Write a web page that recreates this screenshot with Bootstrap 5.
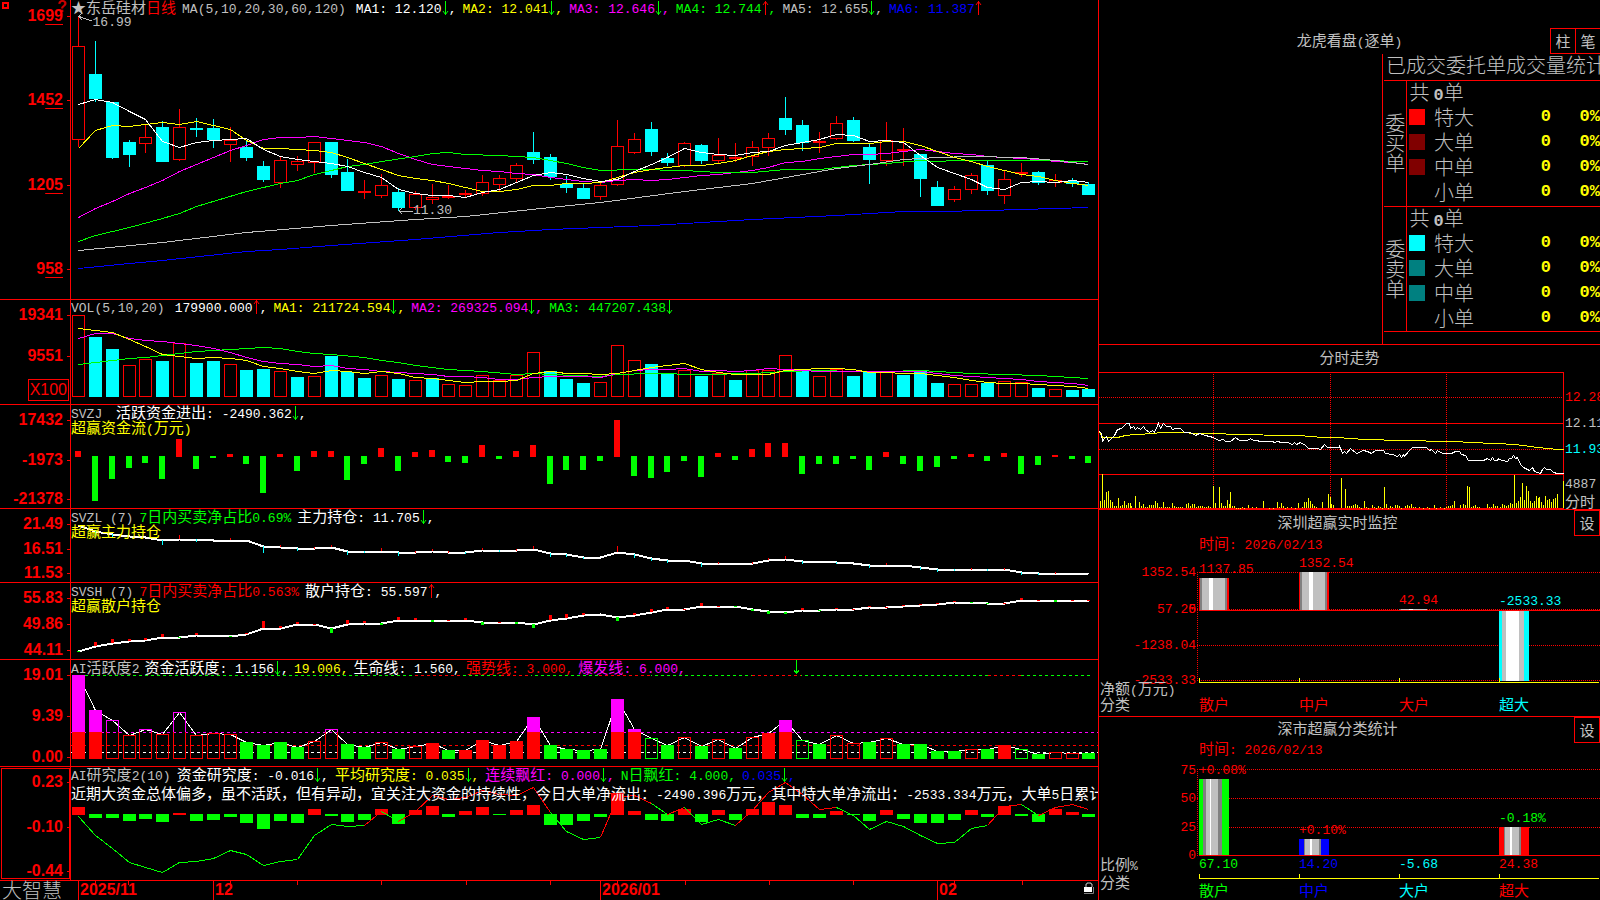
<!DOCTYPE html>
<html lang="zh-CN">
<head>
<meta charset="utf-8">
<meta name="viewport" content="width=device-width, initial-scale=1">
<title>东岳硅材 日线 - 大智慧</title>
<link href="https://cdn.jsdelivr.net/npm/bootstrap@5.3.0/dist/css/bootstrap.min.css" rel="stylesheet">
<style>
:root{--up:#f00;--down:#0ff;--ash:#c0c0c0}
body{background:#000;color:var(--ash);font:13px/16px "Liberation Mono","Noto Sans CJK SC",monospace;overflow:hidden}
.h{font-family:"Noto Sans CJK SC",sans-serif;font-size:15px;font-weight:400}
.app{display:grid;height:100vh;grid-template-columns:minmax(0,1099fr) minmax(0,501fr)}
.charts{display:grid;grid-template-columns:minmax(0,1fr);grid-template-rows:minmax(0,300fr) minmax(0,105fr) minmax(0,104fr) minmax(0,74fr) minmax(0,77fr) minmax(0,107fr) minmax(0,114fr) minmax(0,19fr);border-right:1px solid red}
.side{display:grid;grid-template-columns:minmax(0,1fr);grid-template-rows:minmax(0,345fr) minmax(0,165fr) minmax(0,207fr) minmax(0,183fr)}
.pane{display:flex;border-bottom:1px solid red;min-height:0}
.scale{flex:0 0 71px;border-right:1px solid red;padding:6px 7px 0 0;display:flex;flex-direction:column;justify-content:space-between;align-items:flex-end;color:red;font:bold 16px/18px "Liberation Sans",sans-serif;position:relative}
.scale>span{position:relative}
.scale>span::after{content:"";position:absolute;right:-7px;top:9px;width:3px;height:1px;background:red}
.scale.price{padding-top:7px;padding-bottom:21px}
.scale u{text-underline-offset:3px;text-decoration-thickness:1px}
.scale.vol{justify-content:flex-start;gap:23px}
.scale .unit{border:1px solid red;padding:1px 1px;margin:-9px -6px 0 0;font-weight:400}
.scale .unit::after{display:none}
.scale.picked{outline:1px solid red;outline-offset:-2px}
.help{position:absolute;top:0;right:3px;color:#c00;line-height:14px}
.plot{flex:1;position:relative;min-width:0;overflow:hidden}
.plot svg.g,.mini svg.g,.bars svg.g{position:absolute;inset:0;width:100%;height:100%;shape-rendering:crispEdges}
svg.g *{vector-effect:non-scaling-stroke}
.legend{position:relative;display:flex;align-items:baseline;gap:6px;white-space:pre;height:15px;line-height:14px}
.legend.tight{gap:5px}
.sub{position:relative;white-space:pre;line-height:14px;color:#ff0}
.a{width:7px;height:14px;vertical-align:-2px;fill:none;stroke:currentColor}
.r{color:red}.gn{color:#0f0}.y{color:#ff0}.m{color:#f0f}.b{color:#00f}.c{color:#0ff}.w{color:#fff}
.note{position:absolute}
.times{display:flex;min-height:0}
.brand{flex:0 0 78px;font-size:20px;font-weight:300;line-height:18px;padding-left:2px}
.months{flex:1;display:grid;grid-template-columns:135fr 387fr 337fr 161fr;position:relative;color:red;font:bold 16px/18px "Liberation Sans",sans-serif}
.months>span{border-left:1px solid red;padding-left:1px}
.lock{position:absolute;right:3px;top:1px;width:12px;height:13px}
.ttl{text-align:center;white-space:pre;flex:none}
.stamp{padding-left:100px;height:16px;flex:none;line-height:14px;color:red}
.sq{border:1px solid red;border-radius:0;color:var(--ash);padding:0;width:26px;height:26px;line-height:22px;background:#000}
.sq:hover{color:#fff;border-color:red}
.pair .sq{width:25px;border-right:0}
.orders{width:218px;border-left:1px solid red;padding-left:1px;font-size:20px;overflow:hidden}
.orders .h{font-size:20px;font-weight:300}
.orders table{width:100%;border-collapse:collapse;table-layout:fixed;line-height:22px}
.orders h2{margin:0;padding-left:2px;line-height:22px;height:26px;white-space:nowrap}
.orders tbody{border-top:1px solid red}
.orders tbody:last-child{border-bottom:1px solid red}
.orders td,.orders th{padding:0;height:25px;white-space:nowrap;vertical-align:top}
.orders .kind{border-right:1px solid red;writing-mode:vertical-rl;text-align:center;vertical-align:middle;line-height:20px}
.orders .n{color:#ff0;text-align:right;font:bold 17px/22px "Liberation Mono",monospace}
.orders .sum{padding-left:3px}
.orders .sum b{font:bold 17px/20px "Liberation Mono",monospace;margin-left:4px}
.chip{display:block;width:16px;height:16px;margin:3px 0 0 2px}
.mini{flex:1;position:relative}
.ticks{width:36px;overflow:hidden;padding-left:1px;position:relative}
.bars{position:relative;flex:1;min-height:0}
.bars .v,.bars .s{position:absolute;line-height:16px;margin-top:-8px;white-space:pre}
.bars .s{right:404px;color:red}
.bars .k{position:absolute;left:1px;line-height:16px;margin-top:-9px}
</style>
</head>
<body>
<svg width="0" height="0" class="position-absolute"><symbol id="dn" viewBox="0 0 7 14"><path d="M3.5 0V14M1 10L3.5 13.5L6 10"/></symbol><symbol id="up" viewBox="0 0 7 14"><path d="M3.5 0V14M1 4L3.5 .5L6 4"/></symbol></svg>
<main class="app">
<section class="charts">
 <div class="pane"><div class="scale price"><svg class="position-absolute top-0 start-0" width="70" height="16" fill="none" stroke="red"><path d="M3 3h5v5h-5z" stroke-width="2"/></svg><b class="help">?</b><span>16<u>99</u></span><span>14<u>52</u></span><span>12<u>05</u></span><span>9<u>58</u></span></div>
  <div class="plot" id="p1"><div class="legend"><span class="h">★东岳硅材<span class="r">日线</span></span><span>MA(5,10,20,30,60,120)</span><span class="w ms-1">MA1: 12.120<svg class="a gn"><use href="#dn"/></svg>,</span><span class="y">MA2: 12.041<svg class="a gn"><use href="#dn"/></svg>,</span><span class="m">MA3: 12.646<svg class="a gn"><use href="#dn"/></svg>,</span><span class="gn">MA4: 12.744<svg class="a r"><use href="#up"/></svg>,</span><span>MA5: 12.655<svg class="a gn"><use href="#dn"/></svg>,</span><span class="b">MA6: 11.387<svg class="a r"><use href="#up"/></svg></span></div>
  <span class="note" style="left:2.1%;top:15px">16.99</span><span class="note" style="left:33.3%;top:68%">11.30</span></div></div>
 <div class="pane"><div class="scale vol"><span>19341</span><span>9551</span><span class="unit">X100</span></div>
  <div class="plot" id="p2"><div class="legend"><span>VOL(5,10,20)</span><span class="w ms-1">179900.000<svg class="a r"><use href="#up"/></svg>,</span><span class="y">MA1: 211724.594<svg class="a gn"><use href="#dn"/></svg>,</span><span class="m">MA2: 269325.094<svg class="a gn"><use href="#dn"/></svg>,</span><span class="gn">MA3: 447207.438<svg class="a"><use href="#dn"/></svg></span></div></div></div>
 <div class="pane"><div class="scale"><span>17432</span><span>-1973</span><span>-21378</span></div>
  <div class="plot" id="p3"><div class="legend"><span>SVZJ </span><span class="w"><span class="h">活跃资金进出</span>: -2490.362<svg class="a gn"><use href="#dn"/></svg>,</span></div><div class="sub"><span class="h">超赢资金流</span>(<span class="h">万元</span>)</div></div></div>
 <div class="pane"><div class="scale"><span>21.49</span><span>16.51</span><span>11.53</span></div>
  <div class="plot" id="p4"><div class="legend"><span>SVZL (7)</span><span class="gn">7<span class="h">日内买卖净占比</span>0.69%</span><span class="w"><span class="h">主力持仓</span>: 11.705<svg class="a gn"><use href="#dn"/></svg>,</span></div><div class="sub h">超赢主力持仓</div></div></div>
 <div class="pane"><div class="scale"><span>55.83</span><span>49.86</span><span>44.11</span></div>
  <div class="plot" id="p5"><div class="legend"><span>SVSH (7)</span><span class="r">7<span class="h">日内买卖净占比</span>0.563%</span><span class="w"><span class="h">散户持仓</span>: 55.597<svg class="a r"><use href="#up"/></svg>,</span></div><div class="sub h">超赢散户持仓</div></div></div>
 <div class="pane"><div class="scale"><span>19.01</span><span>9.39</span><span>0.00</span></div>
  <div class="plot" id="p6"><div class="legend tight"><span>AI<span class="h">活跃度</span>2</span><span class="w"><span class="h">资金活跃度</span>: 1.156<svg class="a gn"><use href="#dn"/></svg>,</span><span class="y">19.006,</span><span class="w"><span class="h">生命线</span>: 1.560,</span><span class="r"><span class="h">强势线</span>: 3.000,</span><span class="m"><span class="h">爆发线</span>: 6.000,</span></div></div></div>
 <div class="pane"><div class="scale picked"><span>0.23</span><span>-0.10</span><span>-0.44</span></div>
  <div class="plot" id="p7"><div class="legend"><span>AI<span class="h">研究度</span>2(10)</span><span class="w"><span class="h">资金研究度</span>: -0.016<svg class="a gn"><use href="#dn"/></svg>,</span><span class="y"><span class="h">平均研究度</span>: 0.035<svg class="a gn"><use href="#dn"/></svg>,</span><span class="m"><span class="h">连续飘红</span>: 0.000<svg class="a gn"><use href="#dn"/></svg>,</span><span class="gn">N<span class="h">日飘红</span>: 4.000,</span><span class="b">0.035<svg class="a gn"><use href="#dn"/></svg>,</span></div><div class="sub w pt-1"><span class="h">近期大资金总体偏多，虽不活跃，但有异动，宜关注大资金的持续性，今日大单净流出：</span>-2490.396<span class="h">万元，其中特大单净流出：</span>-2533.334<span class="h">万元，大单</span>5<span class="h">日累计</span></div></div></div>
 <div class="times"><div class="brand h">大智慧</div><div class="months"><svg class="position-absolute w-100 h-100" viewBox="0 0 1020 19" preserveAspectRatio="none" shape-rendering="crispEdges" stroke="red" id="tk"></svg><span>2025/11</span><span>12</span><span>2026/01</span><span>02</span>
  <svg class="lock" viewBox="0 0 12 13"><path d="M3 5V2h1V1h4v1h1v3" fill="none" stroke="#c0c0c0"/><path d="M1 5h8v5h-8z" fill="#fff"/><path d="M1 11.5h9.5V5" fill="none" stroke="#808080"/></svg></div></div>
</section>
<section class="side">
 <div class="pane flex-column position-relative"><div class="d-flex align-items-center justify-content-center flex-shrink-0" style="height:54px;padding-top:28px"><span class="ttl"><span class="h">龙虎看盘</span>(<span class="h">逐单</span>)</span><span class="pair position-absolute end-0 d-flex"><button class="btn sq h">柱</button><button class="btn sq h">笔</button></span></div>
  <div class="orders ms-auto flex-grow-1"><h2 class="h" id="oc">已成交委托单成交量统计</h2><table aria-labelledby="oc"><colgroup><col style="width:22px"><col style="width:28px"><col style="width:60px"><col><col style="width:49px"></colgroup>
  <tbody><tr><th class="kind h" rowspan="5">委买单</th><td colspan="4" class="h sum">共<b>0</b>单</td></tr>
  <tr><td><i class="chip" style="background:#f00"></i></td><td class="h">特大</td><td class="n">0</td><td class="n">0%</td></tr>
  <tr><td><i class="chip" style="background:#800000"></i></td><td class="h">大单</td><td class="n">0</td><td class="n">0%</td></tr>
  <tr><td><i class="chip" style="background:#800000"></i></td><td class="h">中单</td><td class="n">0</td><td class="n">0%</td></tr>
  <tr><td></td><td class="h">小单</td><td class="n">0</td><td class="n">0%</td></tr></tbody>
  <tbody><tr><th class="kind h" rowspan="5">委卖单</th><td colspan="4" class="h sum">共<b>0</b>单</td></tr>
  <tr><td><i class="chip" style="background:#0ff"></i></td><td class="h">特大</td><td class="n">0</td><td class="n">0%</td></tr>
  <tr><td><i class="chip" style="background:#008080"></i></td><td class="h">大单</td><td class="n">0</td><td class="n">0%</td></tr>
  <tr><td><i class="chip" style="background:#008080"></i></td><td class="h">中单</td><td class="n">0</td><td class="n">0%</td></tr>
  <tr><td></td><td class="h">小单</td><td class="n">0</td><td class="n">0%</td></tr></tbody></table></div></div>
 <div class="pane flex-column"><div class="ttl h" style="height:27px;line-height:23px">分时走势</div><div class="d-flex flex-grow-1"><div class="mini" id="mn"></div><div class="ticks d-flex flex-column"><span class="r" style="margin-top:18px">12.28</span><span style="margin-top:10px">12.11</span><span class="c" style="margin-top:10px">11.93</span><span class="mt-auto">4887</span><span class="h">分时</span></div></div></div>
 <div class="pane flex-column position-relative"><button class="btn sq h position-absolute end-0 top-0">设</button><div class="ttl h pe-4" style="height:26px;line-height:24px">深圳超赢实时监控</div><div class="stamp"><span class="h">时间</span>: 2026/02/13</div><div class="bars" id="b1"></div></div>
 <div class="pane flex-column position-relative border-0"><button class="btn sq h position-absolute end-0 top-0">设</button><div class="ttl h pe-4" style="height:24px;line-height:22px">深市超赢分类统计</div><div class="stamp"><span class="h">时间</span>: 2026/02/13</div><div class="bars" id="b2"></div></div>
</section>
</main>
<script>
// Series are stored in thirds of a pixel; each pane converts them with its own base offset.
const N=61,W=1027,cx=i=>Math.round(7+16.84*i),R='#f00',G='#0f0',C='#0ff';
const el=id=>document.getElementById(id);
const rect=(x,y,w,h,f)=>`<rect x="${x}" y="${y}" width="${w}" height="${Math.max(h,1)}" fill="${f}"/>`;
const box=(x,y,w,h,s)=>`<rect x="${x+.5}" y="${y+.5}" width="${w-1}" height="${Math.max(h-1,1)}" fill="none" stroke="${s}"/>`;
const ln=(x1,y1,x2,y2,s,e='')=>`<path d="M${x1} ${y1}L${x2} ${y2}" stroke="${s}" ${e}/>`;
const nums=s=>s.trim().split(/[\s,]+/).map(Number);
const line=(pts,s,w=1)=>`<polyline points="${pts.map(p=>p.join()).join(' ')}" fill="none" stroke="${s}" stroke-width="${w}"/>`;
const put=(id,w,h,s)=>el(id).insertAdjacentHTML('afterbegin',`<svg class="g" viewBox="0 0 ${w} ${h}" preserveAspectRatio="none">${s}</svg>`);
const dense=(a,Y)=>a.map((v,i)=>[cx(i)+.5,Y(v)+.5]);
const sparse=(a,Y)=>{const o=[];for(let i=0;i<a.length;i+=2)o.push([cx(a[i])+.5,Y(a[i+1])+.5]);return o};
const mk=off=>v=>Math.round(v/3+off);

// daily candles: kind high top bottom low
const K=`r 48 139 421 440|c 122 222 297 305|c 305 306 474 477|c 420 426 465 501|r 375 412 432 459|c 363 381 486 486|r 327 382 480 480|c 354 384 390 411|c 357 384 420 444|r 381 419 434 486|c 420 441 474 483|c 483 498 540 546|r 467 481 549 564|r 468 484 495 513|r 426 427 489 519|c 426 426 525 534|c 477 516 573 573|r 540 573 579 597|r 522 556 588 594|c 564 576 624 632|r 573 583 624 630|r 552 592 600 612|r 555 587 594 594|r 570 579 585 590|r 525 547 582 588|r 525 535 555 573|r 489 496 537 545|c 396 456 480 492|c 462 471 532 540|c 528 552 564 579|c 552 564 597 597|r 545 556 591 600|r 360 439 555 555|r 399 418 459 462|c 366 387 456 468|c 459 474 489 498|r 426 430 498 498|c 432 435 483 492|r 414 466 483 492|r 429 470 477 486|r 423 442 470 498|r 399 415 444 468|c 291 354 390 405|c 360 375 429 453|r 396 423 429 459|r 348 370 417 420|c 351 360 423 426|c 432 441 480 552|r 366 421 483 498|r 384 447 453 498|c 462 462 537 591|c 543 561 618 618|r 558 568 600 606|r 519 526 570 582|c 483 495 573 585|r 513 538 588 612|r 489 516 519 531|c 513 516 549 555|r 522 541 548 561|c 534 542 552 561|c 546 552 585 585`.split('|');
{const Y=mk(0);let s='';K.forEach((k,i)=>{let[t,...v]=k.split(' ');v=v.map(Number).map(Y);const x=cx(i);
 if(t=='c')s+=rect(x,v[0],1,v[3]-v[0],C)+rect(x-6,v[1],13,v[2]-v[1],C);
 else s+=rect(x,v[0],1,v[1]-v[0],R)+rect(x,v[2],1,Math.max(v[3]-v[2],0)||1,R)+box(x-6,v[1],13,v[2]-v[1],R)});
s+=line(sparse(nums('0 805 3 790 5 780 10 754 12 748 15 736 20 717 25 697 28 688 34 676 40 658 45 646 49 634 51 634 54 631 60 622'),Y),'#00f');
s+=line(dense(nums('652 623 602 580 560 539 514 492 472 451 434 418 412 411 408 413 421 427 439 458 478 493 498 505 511 514 518 522 530 537 544 545 540 538 541 537 532 526 523 516 509 500 487 482 475 467 463 463 458 452 448 452 458 463 468 470 473 478 482 487 491'),Y),'#f0f');
s+=line(sparse(nums('0 724 1 706 3 680 5 653 6 638 7 619 10 574 11 562 12 549 13 539 14 523 15 511 16 499 17 493 18 482 20 468 21 460 22 457 23 463 25 465 27 472 28 480 29 489 30 502 31 510 33 508 36 511 38 517 40 517 42 508 44 508 46 496 48 490 50 481 51 484 52 481 57 481 60 484'),Y),G);
s+=line(sparse(nums('0 751 5 727 10 697 15 674 20 658 23 649 28 622 31 607 36 573 40 549 45 505 47 493 49 478 51 472 53 469 56 472 58 480 60 493'),Y),'#c0c0c0');
s+=line(dense(nums('445 391 376 379 371 366 371 364 376 388 420 445 445 448 450 456 472 490 506 526 534 541 549 562 574 574 568 556 555 549 549 546 532 516 507 502 496 495 488 480 465 452 446 445 442 430 430 430 424 424 434 452 470 483 497 511 522 528 541 549 556'),Y),'#ff0');
s+=line(dense(nums('311 298 305 333 356 424 442 427 419 418 415 448 467 478 482 490 497 517 531 568 579 586 586 592 577 568 546 525 517 521 533 544 537 513 493 470 445 455 463 466 457 453 436 427 418 403 406 424 421 427 465 500 518 538 562 566 545 542 545 539 546'),Y),'#fff');
s+='<path d="M21 21L8 16.500M11 13L8 16.500L11 20M342 211.500H328M331 208L328 211L331 214" fill="none" stroke="#c0c0c0"/>';
put('p1',W,299,s)}

{const Y=mk(-5),v=nums('61 126 162 211 193 198 145 204 198 208 225 222 229 246 244 183 231 249 241 252 256 249 268 271 241 256 241 172 229 252 264 262 151 196 207 237 226 243 234 255 226 226 181 225 244 223 243 228 232 240 228 264 268 268 264 259 262 279 283 285 282'),t='rccrrcrccrccrcrcccrcrcrrrrrrcccrrrccrcrcrrrcrrccrcccrrcrrcrcc';let s='';
v.forEach((a,i)=>{const y=Y(a);s+=(t[i]=='c'?rect:box)(cx(i)-6,y,13,97-y,t[i]=='c'?C:R)});
s+=line(sparse(nums('0 208 1 201 2 196 3 190 4 187 5 181 7 169 9 163 11 157 12 158 13 168 14 175 15 176 17 187 18 196 19 202 20 211 22 223 24 228 26 238 27 235 28 238 31 244 32 238 34 235 37 238 40 235 42 229 44 226 46 229 48 229 50 226 51 228 53 235 55 238 57 241 58 244 60 250'),Y),G);
s+=line(dense(nums('130 115 115 130 135 139 144 151 160 172 187 199 205 208 214 211 220 223 229 231 235 238 244 244 246 253 252 247 244 244 244 247 235 226 223 223 220 229 226 229 224 220 223 226 229 229 229 229 229 229 229 234 240 244 245 250 251 257 262 265 271'),Y),'#f0f');
s+=line(dense(nums('100 106 112 132 154 178 183 190 187 190 196 213 218 228 234 226 228 233 229 234 246 250 256 262 259 259 256 235 229 233 233 238 233 225 217 211 205 222 230 238 238 237 226 223 220 220 223 232 232 233 235 241 247 254 260 265 265 268 271 274 280'),Y),'#ff0');
put('p2',W,104,s)}

const sign=(id,h,off,mid,w,data,extra='')=>{const Y=mk(off);let s='';nums(data).forEach((v,i)=>{const x=cx(i)-(w>6?6:3);s+=v<mid?rect(x,Y(v),w,Y(mid+2)-Y(v),R):rect(x,Y(mid-1),w,Y(v)-Y(mid-1),G)});put(id,W,h,s+extra)};
sign('p3',103,-110,484,6,'467 618 552 519 504 552 431 522 489 476 507 594 476 528 467 467 555 507 458 528 470 464 501 504 449 492 467 449 567 525 525 498 375 543 549 531 498 546 473 495 461 443 443 537 507 507 492 525 470 507 528 516 492 476 498 473 537 510 479 492 504');

{const Y=mk(-214),d=nums('691 708 717 724 727 736 731 733 735 734 736 753 755 759 758 755 767 769 768 772 770 768 770 771 765 765 764 761 773 778 785 786 770 778 788 795 795 803 804 804 803 796 791 798 799 802 804 810 810 810 817 822 822 822 822 823 832 834 834 834 837');
const t={1:726,2:730,5:750,6:720,7:741,9:729,11:774,12:750,13:768,15:749,16:780,17:774,18:759,19:783,21:762,23:777,24:759,25:771,27:753,28:786,29:786,30:792,32:753,33:789,34:798,35:804,37:816,41:789,42:783,43:807,45:807,47:819,48:804,50:824,51:831,52:828,54:828,56:840,57:840};
let s=line(dense(d,Y),'#fff',2);for(const i in t){const a=Y(t[i]),b=Y(d[i]);s+=rect(cx(i),Math.min(a,b),1,Math.abs(a-b),a<b?R:C)}
for(const i of [14,20,22,26,38,40,53,55,58])s+=rect(cx(i),Y(d[i])-1,1,2,R);put('p4',W,73,s)}

{const Y=mk(-3),d=nums('214 199 190 184 181 171 171 166 165 168 163 145 143 132 132 145 132 128 129 121 119 121 121 119 127 125 127 133 121 113 105 103 112 106 97 88 87 79 77 78 86 92 97 91 91 88 87 82 81 79 76 72 67 66 69 68 60 60 60 60 60');
const t={1:186,2:177,3:178,4:174,5:162,7:159,10:159,11:123,12:138,13:126,15:158,16:120,17:123,18:134,19:111,20:114,21:125,23:114,24:134,26:131,27:143,28:105,29:102,30:99,32:122,33:99,34:87,35:81,37:69,40:92,41:101,42:101,43:84,45:84,47:78,49:75,50:72,51:69,52:63,56:54,58:65};
let s=line(dense(d,Y),'#fff',2);for(const i in t){const a=Y(t[i]),b=Y(d[i]);s+=rect(cx(i)-1,Math.min(a,b),3,Math.abs(a-b)||1,a<b?R:G)}
for(const i of [0,6,9,39,44,53,54])s+=rect(cx(i)-1,Y(d[i]),3,1,G);for(const i of [14,22,25,36,38,46,48,55,57,59,60])s+=rect(cx(i)-1,Y(d[i]),3,1,R);put('p5',W,76,s)}

{const Y=mk(-80),v=nums('285 390 421 466 448 463 397 466 460 463 486 495 486 501 484 448 492 501 485 507 499 489 510 510 480 496 483 411 495 507 510 507 357 447 475 496 472 498 478 504 472 459 420 481 492 466 490 486 475 492 492 513 513 508 507 495 508 522 517 520 519'),t='RRrrrrrrrrGGGGrrGGrGrRGRRRRRGGGGRRgGrGrGrRRgGrrGrGGGGrGRgGrrG';
const top=Y(286)+.5,dash='stroke-dasharray="3 3"';let s=ln(14,top,1019,top,G,dash);
[[344,392],[430,460],[528,580],[681,730],[917,950]].forEach(([a,b])=>s+=rect(a,Y(286),b-a,1,'#000')+ln(a,top,b,top,R,dash));
s+=ln(0,72.5,W,72.5,'#f0f',dash)+ln(0,85.5,W,85.5,R,dash)+ln(0,92.5,W,92.5,'#fff',dash)+line(dense(v,Y),'#fff');
v.forEach((a,i)=>{const y=Y(a),x=cx(i)-6,c=t[i].toLowerCase()=='r'?R:G;if(t[i]<'a'){s+=rect(x,y,13,99-y,c);if(y<72)s+=rect(x,y,13,72-y,'#f0f')}else{s+=box(x,y,13,99-y,c);if(y<72)s+=`<path d="M${x+.5} 72V${y+.5}H${x+12.5}V72" fill="none" stroke="#f0f"/>`}});
s+='<path d="M725.500 0V14M723 10L725.500 13.500L728 10" fill="none" stroke="#0f0"/>';put('p6',W,106,s)}

{const Y=mk(-187),d=dense(nums('709 764 805 847 861 877 845 844 834 811 821 856 842 837 764 733 739 736 693 722 693 645 657 650 630 642 646 622 697 753 778 771 650 644 668 702 682 731 718 734 690 636 607 643 686 682 706 748 724 738 766 790 787 743 736 678 673 706 681 673 688'),Y);
const seg='ggggggggggggggggg'+'rg'+'rrrrrrrrr'+'ggg'+'rrr'+'gr'+'ggg'+'rrrrrr'+'ggggggggg'+'rrgrrr';let s='';for(let i=0;i<60;i++)s+=ln(...d[i],...d[i+1],seg[i]=='g'?G:R);
sign('p7',113,-187,703,13,'681 714 714 723 717 726 699 723 720 711 729 747 723 729 687 708 726 720 687 732 690 678 711 693 681 705 690 675 735 735 723 711 640 693 720 723 687 726 690 720 687 666 675 714 714 693 705 723 690 717 729 729 720 690 711 678 708 726 687 696 711',s)}

el('tk').innerHTML=[17,50,152,219,303,388,472,539,607,691,775,876,944].map(x=>ln(x+.5,0,x+.5,4,R)).join('');

// intraday chart
{const P=(s,w)=>{const a=nums(s),o=[];for(let i=0;i<a.length;i+=2)o.push([Math.round((a[i]-27)/3)+.5,Math.round(a[i+1]/3-32)+.5]);return o};
const d='stroke-dasharray="1 1"';let s='<rect x="-1" y=".5" width="465.500" height="136" fill="none" stroke="red"/>'+ln(0,25.5,464,25.5,R,d)+ln(0,51.5,464,51.5,R)+ln(0,77.5,464,77.5,R,d)+ln(0,102.5,464,102.5,R)+[114.5,231.5,347.5].map(x=>ln(x,0,x,136,R,d)).join('');
P('31 483 37 402 43 480 49 456 55 453 61 480 67 486 73 498 79 498 85 474 91 498 97 495 103 483 109 495 115 489 121 489 124 498 136 468 148 486 154 498 160 492 166 501 172 501 178 495 184 495 190 495 196 483 202 489 208 501 214 501 220 486 226 501 232 501 238 501 247 489 253 498 259 501 265 501 271 501 277 501 289 492 295 489 301 498 307 492 313 492 319 501 325 498 331 498 337 498 343 501 349 501 355 498 361 501 370 438 376 489 388 441 394 489 400 498 406 498 412 480 418 492 421 456 427 498 433 498 439 504 445 504 451 504 457 501 463 504 475 495 487 501 499 501 520 483 538 504 550 504 562 486 568 501 574 489 580 498 586 504 592 501 604 501 616 504 625 489 637 501 643 486 649 486 655 474 661 483 667 492 673 498 679 501 697 486 715 462 721 471 724 492 730 495 754 414 766 447 772 498 778 498 784 498 790 495 796 492 802 495 808 501 814 504 823 483 829 501 835 504 847 495 853 501 859 504 865 498 871 501 877 504 883 441 889 492 895 504 901 498 907 501 915 495 922 495 928 498 934 504 946 498 952 495 958 498 964 492 970 501 976 501 988 501 1000 504 1012 501 1018 504 1033 495 1039 504 1051 501 1063 504 1069 501 1075 498 1081 498 1087 495 1093 483 1111 495 1120 492 1126 495 1132 438 1138 441 1144 501 1150 498 1156 495 1162 501 1168 501 1192 492 1198 501 1204 501 1210 492 1216 498 1222 498 1231 501 1237 492 1243 495 1249 498 1255 495 1261 489 1267 492 1273 405 1279 489 1285 483 1291 471 1297 429 1303 480 1309 438 1315 453 1321 483 1327 489 1333 483 1339 468 1345 474 1348 471 1354 486 1360 495 1366 468 1372 480 1378 477 1384 486 1390 477 1396 474 1402 462 1420 423').forEach(([x,y])=>s+=rect(x-.5,y-.5,1,136.5-y,'#ff0'));
s+=line(P('28 273 36 290 72 291 80 290 105 284 135 281 195 279 205 277 385 278 425 283 610 284 618 286 670 287 690 290 750 290 768 295 838 296 845 298 915 299 920 301 1090 302 1100 304 1135 305 1140 307 1215 308 1220 310 1270 311 1300 316 1340 321 1370 324 1400 327 1420 328'),'#ff0');
s+=line(P('28 273 32 280 37 304 42 293 48 287 55 304 60 296 72 285 80 266 92 264 100 257 108 250 116 250 121 265 128 257 134 268 141 261 150 266 158 259 166 266 176 275 186 270 192 275 203 250 210 264 220 250 228 257 240 259 246 268 255 264 270 265 282 275 300 277 314 284 326 278 345 286 368 290 383 301 400 297 406 304 420 304 434 292 446 300 470 300 479 295 490 301 520 304 545 302 552 306 560 303 572 307 590 307 605 312 612 306 618 313 630 307 645 316 655 323 680 324 690 326 702 312 712 322 748 322 748 315 755 340 762 334 767 340 780 325 798 340 818 330 830 333 842 340 856 331 880 331 886 340 905 342 920 349 926 343 934 350 938 343 942 348 955 333 967 322 1008 322 1018 331 1024 328 1034 340 1042 331 1055 340 1084 340 1095 334 1107 334 1112 342 1126 344 1133 360 1180 360 1192 353 1199 360 1205 352 1212 360 1222 360 1225 354 1232 360 1250 364 1256 354 1262 354 1268 344 1274 355 1280 352 1290 372 1298 382 1318 390 1325 382 1332 392 1342 397 1350 400 1356 388 1361 382 1368 388 1380 388 1390 396 1402 398 1420 400'),'#fff');
put('mn',465,137,s)}

// category bar charts; y values are relative to the top of the bar area
const stripe=(x,y,h,parts)=>parts.map(([w,c])=>{const r=rect(x,y,w,h,c);x+=w;return r}).join('');
const L='#c0c0c0',D='#808080',F='#fff',dots='stroke-dasharray="1 1"';
function cat(id,H,grid,zero,axis,bars,scale,vals,keys){
 let s=grid.map(y=>ln(98,y+.5,501,y+.5,R,dots)).join('')+ln(98.5,grid[0],98.5,grid[grid.length-1],R,dots)+bars.map(b=>stripe(...b)).join('')+ln(100,zero+.5,501,zero+.5,R);
 s+=ln(100,axis+.5,500,axis+.5,'#ff0')+[100,200,300,400].map(x=>ln(x+.5,axis-4,x+.5,axis,'#ff0')).join('');put(id,501,H,s);
 let t=scale.map(([v,y])=>`<span class="s" style="top:${y/H*100}%">${v}</span>`).join('');
 t+=vals.map(([x,y,v,c])=>`<span class="v ${c}" style="left:${x/501*100}%;top:${y/H*100}%">${v}</span>`).join('');
 t+=keys.map(([v,y])=>`<span class="k" style="top:${y/H*100}%">${v}</span>`).join('');
 el(id).insertAdjacentHTML('beforeend',t)}
const h=t=>`<span class="h">${t}</span>`;
cat('b1',164,[20,57,93,128],58,130,[[100,26,32,[[1,R],[2,D],[7,L],[4,F],[12,L],[2,D],[2,R]]],[200,20,38,[[1,R],[2,D],[7,L],[4,F],[12,L],[2,D],[2,R]]],[300,57,1,[[2,D],[8,L],[4,F],[14,L]]],[400,59,70,[[3,C],[4,L],[13,F],[5,L],[5,C]]]],
 [['1352.54',21],['57.25',58],['0',58],['-1238.04',94],['-2533.33',129]],
 [[100,18,'1137.85','r'],[200,12,'1352.54','r'],[300,49,'42.94','r'],[400,50,'-2533.33','c'],[100,152,h('散户'),'r'],[200,152,h('中户'),'r'],[300,152,h('大户'),'r'],[400,152,h('超大'),'c']],
 [[h('净额')+'('+h('万元')+')',137],[h('分类'),153]]);
cat('b2',143,[12,41,70,98],98,121,[[100,22,76,[[4,G],[3,D],[4,L],[1,F],[7,L],[4,D],[7,G]]],[200,82,16,[[5,'#00f'],[1,D],[5,L],[2,F],[7,L],[2,D],[8,'#00f']]],[400,70,28,[[5,R],[1,D],[5,L],[2,F],[7,L],[2,D],[8,R]]]],
 [['75',14],['50',42],['25',71],['0',99]],
 [[100,14,'+0.08%','r'],[200,74,'+0.10%','r'],[400,62,'-0.18%','gn'],[100,108,'67.10','gn'],[200,108,'14.20','b'],[300,108,'-5.68','c'],[400,108,'24.38','r'],[100,133,h('散户'),'gn'],[200,133,h('中户'),'b'],[300,133,h('大户'),'c'],[400,133,h('超大'),'r']],
 [[h('比例')+'%',108],[h('分类'),126]]);
</script>
<script src="https://cdn.jsdelivr.net/npm/bootstrap@5.3.0/dist/js/bootstrap.bundle.min.js"></script>
</body>
</html>
